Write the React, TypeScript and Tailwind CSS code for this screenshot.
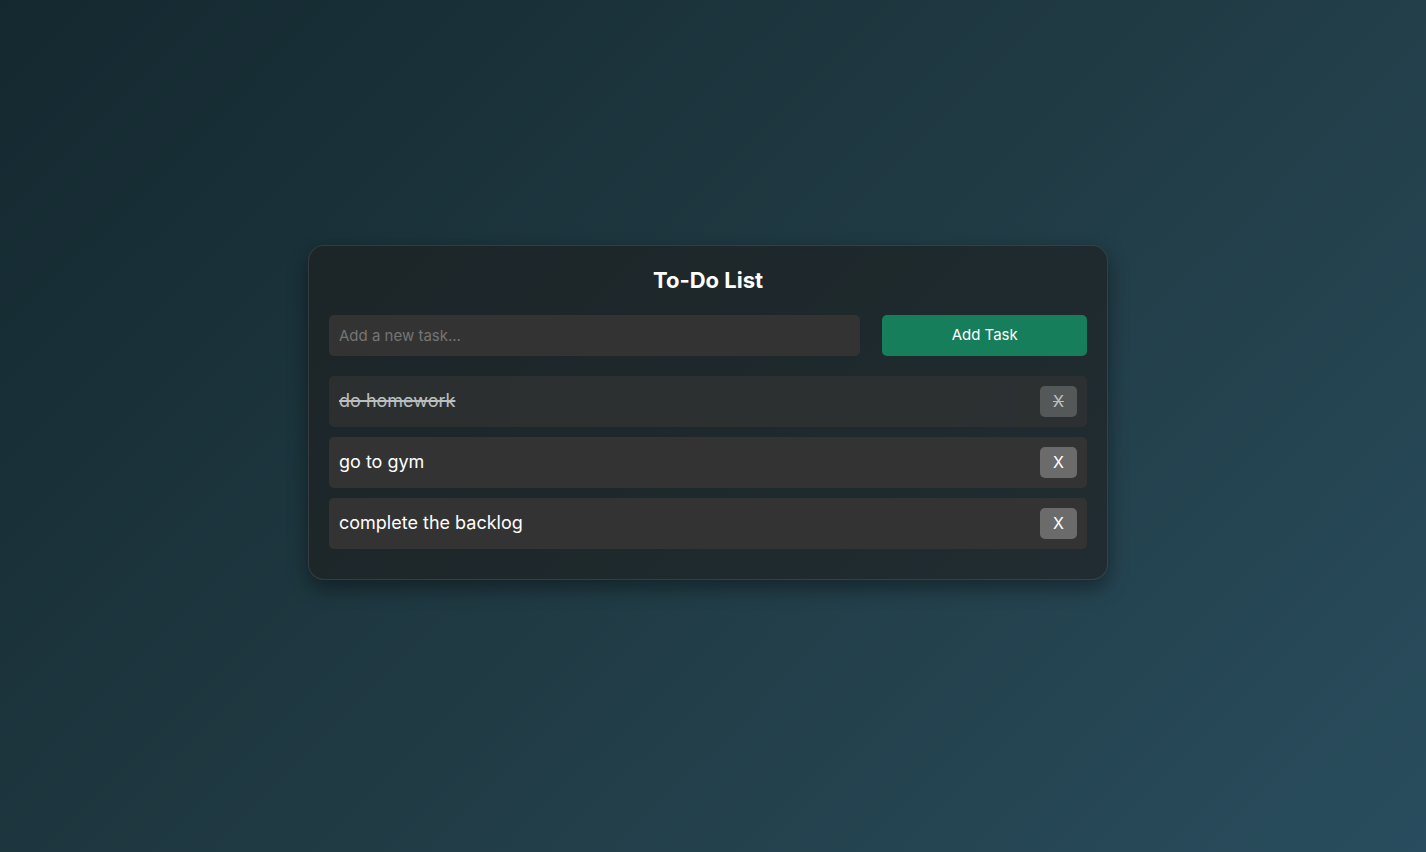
import { useState } from "react";

type Task = { id: number; text: string; done: boolean };

const initialTasks: Task[] = [
  { id: 1, text: "do homework", done: true },
  { id: 2, text: "go to gym", done: false },
  { id: 3, text: "complete the backlog", done: false },
];

export default function App() {
  const [tasks, setTasks] = useState<Task[]>(initialTasks);
  const [draft, setDraft] = useState("");

  const addTask = () => {
    const text = draft.trim();
    if (!text) return;
    setTasks([...tasks, { id: Date.now(), text, done: false }]);
    setDraft("");
  };

  return (
    <div className="flex min-h-screen items-center justify-center bg-[linear-gradient(135deg,#14282f,#203a43,#294d5e)] pr-[10px] pb-[28px] font-['Inter',sans-serif] text-white">
      <main className="w-full max-w-[800px] rounded-2xl border border-white/10 bg-[#1e1e1e]/60 p-5 shadow-[0_8px_20px_rgba(0,0,0,0.4)]">
        <h1 className="mb-5 text-center text-[22px] leading-[29px] font-bold">To-Do List</h1>
        <form
          className="mb-5 flex justify-between"
          onSubmit={(e) => {
            e.preventDefault();
            addTask();
          }}
        >
          <input
            type="text"
            aria-label="New task"
            placeholder="Add a new task..."
            value={draft}
            onChange={(e) => setDraft(e.target.value)}
            className="h-[41px] w-[70%] rounded-[5px] bg-[#333] px-[10px] text-[15px] outline-none placeholder:text-[#757575]"
          />
          <button type="submit" className="h-[41px] w-[27%] rounded-[5px] bg-[#177e5b] text-[15px]">
            Add Task
          </button>
        </form>
        <ul>
          {tasks.map((task) => (
            <li
              key={task.id}
              onClick={() =>
                setTasks(tasks.map((t) => (t.id === task.id ? { ...t, done: !t.done } : t)))
              }
              className={
                task.done
                  ? "mb-[10px] flex cursor-pointer items-center justify-between rounded-[5px] bg-[#333] p-[10px] text-lg opacity-70"
                  : "mb-[10px] flex cursor-pointer items-center justify-between rounded-[5px] bg-[#333] p-[10px] text-lg"
              }
            >
              <span className={task.done ? "line-through decoration-2" : ""}>{task.text}</span>
              <button
                type="button"
                aria-label={`Delete ${task.text}`}
                onClick={(e) => {
                  e.stopPropagation();
                  setTasks(tasks.filter((t) => t.id !== task.id));
                }}
                className={
                  task.done
                    ? "h-[31px] w-[37px] rounded-[5px] bg-[#6b6b6b] text-base line-through decoration-1"
                    : "h-[31px] w-[37px] rounded-[5px] bg-[#6b6b6b] text-base"
                }
              >
                X
              </button>
            </li>
          ))}
        </ul>
      </main>
    </div>
  );
}
